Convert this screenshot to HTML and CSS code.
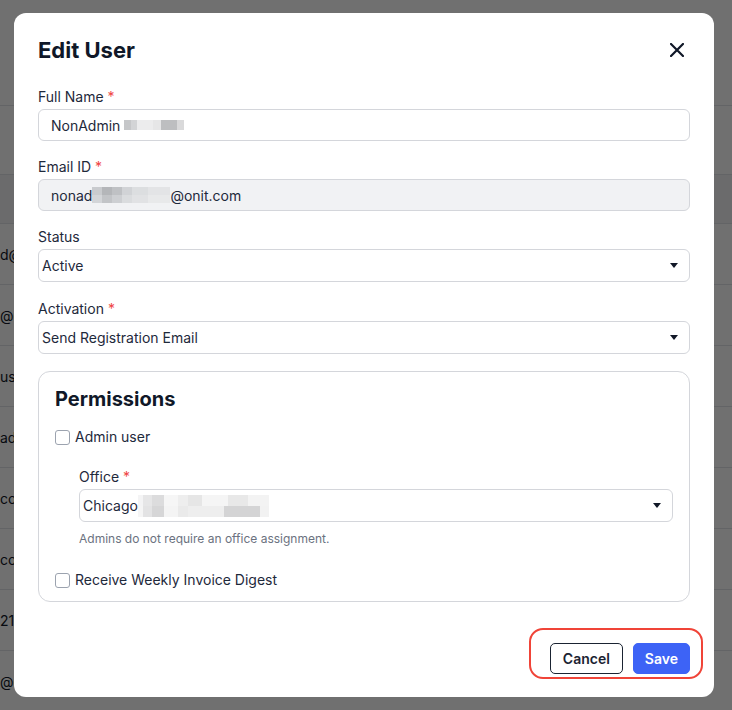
FILE: index.html
```html
<!DOCTYPE html>
<html lang="en">
<head>
    <meta charset="UTF-8">
    <meta name="viewport" content="width=device-width, initial-scale=1.0">
    <title>Users - Edit User</title>
    <link rel="stylesheet" href="styles.css">
</head>
<body>

    <!-- user list behind the dialog -->
    <div class="users-table">
        <div class="table-top"></div>
        <div class="table-row table-row-tall"></div>
        <div class="table-head"></div>
        <div class="table-row"><span class="cell">d@</span></div>
        <div class="table-row"><span class="cell">@o</span></div>
        <div class="table-row"><span class="cell">use</span></div>
        <div class="table-row"><span class="cell">adr</span></div>
        <div class="table-row"><span class="cell">co</span></div>
        <div class="table-row"><span class="cell">co</span></div>
        <div class="table-row"><span class="cell">21.</span></div>
        <div class="table-row"><span class="cell">@c</span></div>
    </div>

    <div class="overlay">
        <div class="modal" role="dialog" aria-labelledby="modal-title">
            <div class="modal-header">
                <h2 id="modal-title">Edit User</h2>
                <button type="button" class="close-btn" aria-label="Close">
                    <svg width="14" height="14" viewBox="0 0 14 14">
                        <path d="M1 1L13 13M13 1L1 13" stroke="#101828" stroke-width="2.2" stroke-linecap="square"/>
                    </svg>
                </button>
            </div>

            <form id="edit-user-form">
                <div class="field">
                    <label for="full_name">Full Name <span class="req">*</span></label>
                    <div class="input" id="full_name">NonAdmin <span class="redact redact-name"></span></div>
                </div>

                <div class="field">
                    <label for="email">Email ID <span class="req">*</span></label>
                    <div class="input input-disabled" id="email">nonad<span class="redact redact-email"></span>@onit.com</div>
                </div>

                <div class="field field-select">
                    <label for="status">Status</label>
                    <div class="select-wrap">
                        <select id="status" name="status">
                            <option>Active</option>
                            <option>Inactive</option>
                        </select>
                        <svg class="caret" width="8" height="5" viewBox="0 0 8 5"><path d="M0 0H8L4 5Z" fill="#111827"/></svg>
                    </div>
                </div>

                <div class="field field-select">
                    <label for="activation">Activation <span class="req">*</span></label>
                    <div class="select-wrap">
                        <select id="activation" name="activation">
                            <option>Send Registration Email</option>
                            <option>Activate Now</option>
                        </select>
                        <svg class="caret" width="8" height="5" viewBox="0 0 8 5"><path d="M0 0H8L4 5Z" fill="#111827"/></svg>
                    </div>
                </div>

                <fieldset class="permissions">
                    <h3>Permissions</h3>

                    <label class="check">
                        <input type="checkbox" name="admin_user"> Admin user
                    </label>

                    <div class="office">
                        <label for="office">Office <span class="req">*</span></label>
                        <div class="select-wrap">
                            <div class="select-fake" id="office">Chicago<span class="redact redact-office"></span></div>
                            <svg class="caret" width="8" height="5" viewBox="0 0 8 5"><path d="M0 0H8L4 5Z" fill="#111827"/></svg>
                        </div>
                        <p class="hint">Admins do not require an office assignment.</p>
                    </div>

                    <label class="check check-last">
                        <input type="checkbox" name="invoice_digest"> Receive Weekly Invoice Digest
                    </label>
                </fieldset>

                <div class="modal-footer">
                    <div class="actions">
                        <span class="highlight"></span>
                        <button type="button" class="btn btn-outline">Cancel</button>
                        <button type="submit" class="btn btn-primary">Save</button>
                    </div>
                </div>
            </form>
        </div>
    </div>

</body>
</html>
```

FILE: styles.css
```css
/* base */
body {
    margin: 0;
    font-family: "Inter", "Noto Sans", sans-serif;
    color: #1e293b;
    background-color: #fff;
    overflow: hidden;
}

/* user list in the background */
.users-table {
    font-size: 14px;
    color: #111827;
}
.table-top {
    height: 105px;
}
.table-row {
    height: 60px;
    border-top: 1px solid #e1e3e8;
    display: flex;
    align-items: center;
}
.table-row-tall {
    height: 68px;
}
.table-head {
    height: 48px;
    border-top: 1px solid #e1e3e8;
    background-color: #f3f4f6;
}
.cell {
    white-space: nowrap;
}

/* dialog */
.overlay {
    position: fixed;
    inset: 0;
    background-color: rgba(0, 0, 0, 0.56);
    padding: 13px 0 0 14px;
}
.modal {
    width: 700px;
    box-sizing: border-box;
    background-color: #fff;
    border-radius: 12px;
    padding: 23px 24px 23px;
}
.modal-header {
    display: flex;
    justify-content: space-between;
    align-items: center;
    height: 28px;
    margin-bottom: 23px;
}
.modal-header h2 {
    margin: 0;
    font-size: 22px;
    line-height: 28px;
    font-weight: 700;
    color: #101828;
}
.close-btn {
    width: 26px;
    height: 26px;
    padding: 0;
    border: none;
    background: none;
    display: flex;
    align-items: center;
    justify-content: center;
    cursor: pointer;
}

/* fields */
.field {
    margin-bottom: 16px;
}
.field-select {
    margin-bottom: 17px;
}
label {
    display: block;
    font-size: 14px;
    line-height: 20px;
    margin-bottom: 2px;
    color: #1e293b;
}
.req {
    color: #ef4444;
}
.input {
    height: 32px;
    box-sizing: border-box;
    border: 1px solid #d4d6db;
    border-radius: 6px;
    padding: 0 12px;
    font-size: 14px;
    color: #1e293b;
    display: flex;
    align-items: center;
    white-space: pre;
}
.input-disabled {
    background-color: #f1f2f4;
}
.select-wrap {
    position: relative;
}
select,
.select-fake {
    display: flex;
    align-items: center;
    width: 100%;
    height: 33px;
    box-sizing: border-box;
    border: 1px solid #d4d6db;
    border-radius: 6px;
    padding: 0 3px;
    font-family: inherit;
    font-size: 14px;
    color: #1e293b;
    background-color: #fff;
    appearance: none;
    -webkit-appearance: none;
}
.caret {
    position: absolute;
    right: 12px;
    top: 14px;
}

/* blurred personal data */
.redact {
    display: inline-block;
    vertical-align: middle;
}
.redact-name {
    width: 60px;
    height: 10px;
    background: linear-gradient(90deg, #c6c7c9 0 7px, #d3d4d6 7px 13px, #ececed 13px 29px, #e6e6e7 29px 37px, #bdbec0 37px 53px, #d9d9da 53px 60px);
}
.redact-email {
    width: 78px;
    height: 16px;
    background:
        linear-gradient(90deg, #c9cbce 0 10px, #b4b6b9 10px 20px, #bfc1c4 20px 30px, #d1d3d6 30px 40px, #dcdee0 40px 56px, #e3e4e6 56px 78px) top / 100% 8px no-repeat,
        linear-gradient(90deg, #d3d5d8 0 10px, #c2c4c7 10px 20px, #cdcfd2 20px 30px, #dadcde 30px 40px, #e1e2e4 40px 56px, #e8e9ea 56px 78px) bottom / 100% 8px no-repeat;
}
.redact-office {
    width: 131px;
    height: 22px;
    background:
        linear-gradient(90deg, #f4f4f5 0 5px, #e6e6e7 5px 14px, #dcdcdd 14px 26px, #f6f6f6 26px 40px, #eeeeee 40px 50px, #e6e6e6 50px 64px, #f5f5f5 64px 90px, #e8e8e8 90px 110px, #f3f3f3 110px 131px) top / 100% 11px no-repeat,
        linear-gradient(90deg, #f5f5f5 0 5px, #e3e3e4 5px 14px, #d6d6d7 14px 26px, #f4f4f4 26px 40px, #eaeaea 40px 50px, #eeeeee 50px 86px, #d4d4d5 86px 122px, #f2f2f2 122px 131px) bottom / 100% 11px no-repeat;
}

/* permissions box */
.permissions {
    margin: 0;
    border: 1px solid #d4d6db;
    border-radius: 12px;
    padding: 15px 16px 11px;
}
.permissions h3 {
    margin: 0 0 16px;
    font-size: 20px;
    line-height: 24px;
    font-weight: 700;
    color: #101828;
}
.check {
    display: flex;
    align-items: center;
    gap: 5px;
    margin: 0;
}
.check input {
    appearance: none;
    -webkit-appearance: none;
    width: 15px;
    height: 15px;
    margin: 0;
    border: 1px solid #9ca3af;
    border-radius: 3px;
    background-color: #fff;
}
.office {
    margin: 20px 0 23px 24px;
}
.hint {
    margin: 9px 0 0;
    font-size: 12px;
    line-height: 16px;
    color: #6b7280;
}

/* footer */
.modal-footer {
    display: flex;
    justify-content: flex-end;
    margin-top: 41px;
}
.actions {
    position: relative;
    display: flex;
    gap: 10px;
}
.highlight {
    position: absolute;
    top: -15px;
    bottom: -5px;
    left: -21px;
    right: -13px;
    border: 2px solid #f04438;
    border-radius: 14px;
    pointer-events: none;
}
.btn {
    height: 31px;
    padding: 0 12px;
    border-radius: 5px;
    font-family: inherit;
    font-size: 14px;
    font-weight: 600;
    cursor: pointer;
}
.btn-outline {
    background-color: #fff;
    border: 1px solid #1a2332;
    color: #1a2332;
}
.btn-primary {
    padding: 0 11px;
    background-color: #3d63f6;
    border: 1px solid #3d63f6;
    color: #fff;
}
```
